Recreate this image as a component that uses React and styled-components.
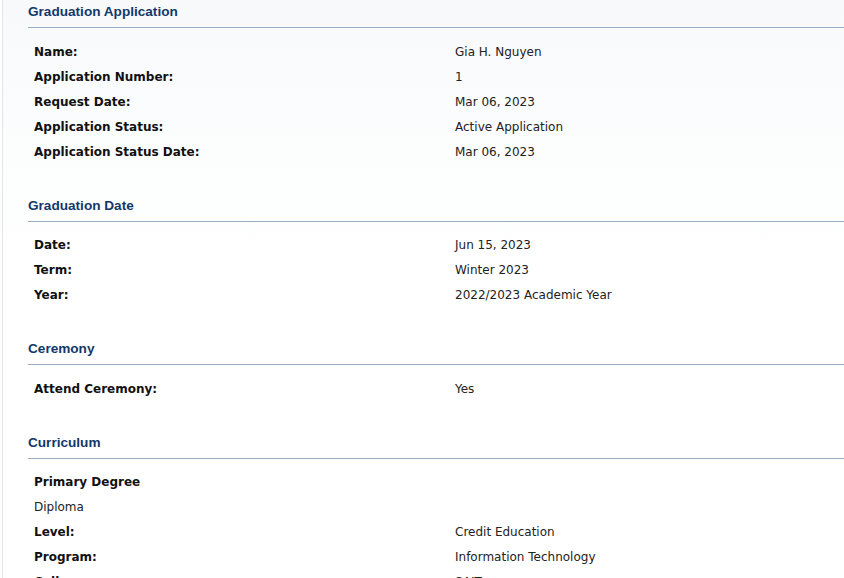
import React from "react";
import styled, { createGlobalStyle } from "styled-components";

const GlobalStyle = createGlobalStyle`
  html, body {
    margin: 0;
    padding: 0;
    background: #fff;
  }
`;

const Page = styled.div`
  padding-left: 2px;
  background: #fff;
`;

const Panel = styled.div`
  border-left: 1px solid #dfe6ee;
  min-height: 578px;
  background: linear-gradient(#f8f9fb 0px, #fcfdfd 150px, #fff 260px);
`;

const Section = styled.section`
  padding-left: 25px;
  margin-bottom: 29.5px;
`;

const Heading = styled.h2`
  margin: 0;
  height: 28px;
  box-sizing: border-box;
  padding: 4px 0 0 0;
  border-bottom: 1px solid #9aacbe;
  font-family: "Liberation Sans", Arial, sans-serif;
  font-size: 13.6px;
  font-weight: bold;
  color: #12386a;
  line-height: 16px;
`;

const Rows = styled.div`
  padding-top: 11px;
`;

const Row = styled.div`
  display: grid;
  grid-template-columns: 421px 1fr;
  height: 25px;
  align-items: center;
  padding-left: 6px;
  font-family: "DejaVu Sans", Verdana, sans-serif;
  font-size: 12px;
`;

const Label = styled.div`
  font-weight: bold;
  color: #111;
`;

const Value = styled.div`
  color: #222;
`;

const sections = [
  {
    title: "Graduation Application",
    rows: [
      ["Name:", "Gia H. Nguyen"],
      ["Application Number:", "1"],
      ["Request Date:", "Mar 06, 2023"],
      ["Application Status:", "Active Application"],
      ["Application Status Date:", "Mar 06, 2023"],
    ],
  },
  {
    title: "Graduation Date",
    rows: [
      ["Date:", "Jun 15, 2023"],
      ["Term:", "Winter 2023"],
      ["Year:", "2022/2023 Academic Year"],
    ],
  },
  {
    title: "Ceremony",
    rows: [["Attend Ceremony:", "Yes"]],
  },
  {
    title: "Curriculum",
    rows: [
      ["Primary Degree", ""],
      [null, "Diploma"],
      ["Level:", "Credit Education"],
      ["Program:", "Information Technology"],
      ["College:", "SAIT"],
    ],
  },
];

const App = () => (
  <Page>
    <GlobalStyle />
    <Panel>
      {sections.map((s) => (
        <Section key={s.title}>
          <Heading>{s.title}</Heading>
          <Rows>
            {s.rows.map(([label, value], i) => (
              <Row key={i}>
                {label === null ? (
                  <Value>{value}</Value>
                ) : (
                  <>
                    <Label>{label}</Label>
                    <Value>{value}</Value>
                  </>
                )}
              </Row>
            ))}
          </Rows>
        </Section>
      ))}
    </Panel>
  </Page>
);

export default App;
